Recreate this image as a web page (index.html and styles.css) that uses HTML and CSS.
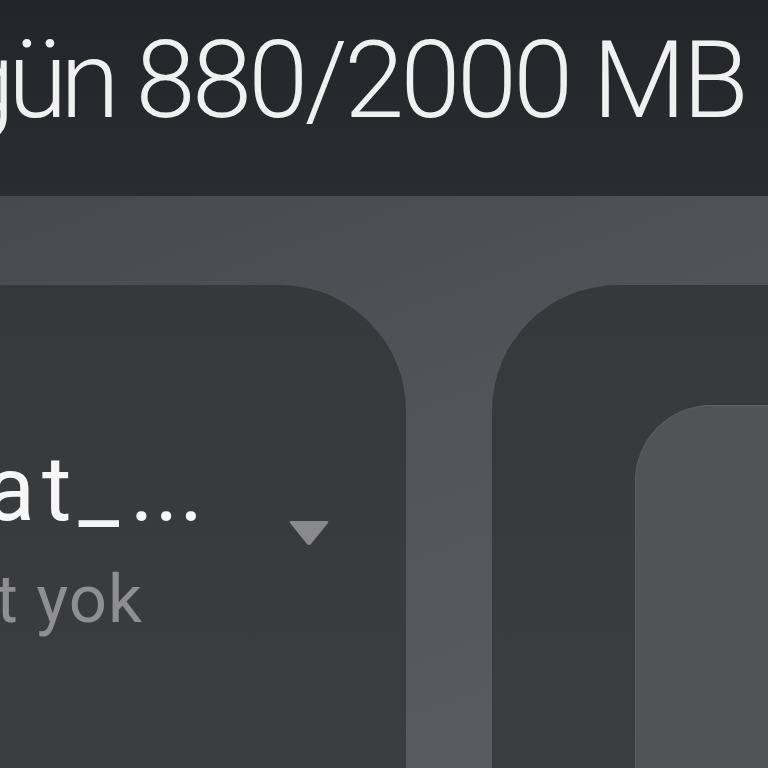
FILE: index.html
```html
<!DOCTYPE html>
<html lang="tr">

<head>
    <title>Veri kullanımı</title>
    <meta charset="utf-8">
    <meta name="viewport" content="width=device-width, initial-scale=1.0">
    <link rel="stylesheet" href="styles.css">
</head>

<body>
    <header class="ust">
        <h1 class="kullanim"><span class="gun">gün</span> 880/2000 MB</h1>
    </header>

    <main class="kartlar">
        <article class="kart sol">
            <div class="satir">
                <div class="metin">
                    <h2 class="baslik">at_<span class="nokta">...</span></h2>
                    <p class="alt">t yok</p>
                </div>
                <svg class="ok" width="42" height="26" viewBox="0 0 42 26">
                    <path d="M3 1 H39 Q41 1 40 3 L23 24 Q21 26 19 24 L2 3 Q1 1 3 1 Z" />
                </svg>
            </div>
        </article>

        <article class="kart sag">
            <div class="ic"></div>
        </article>
    </main>
</body>

</html>
```

FILE: styles.css
```css
html,
body {
    margin: 0;
    height: 100%;
    overflow: hidden;
    background: #4f5053;
    font-family: Roboto, "Noto Sans", sans-serif;
}

.ust {
    height: 196px;
    box-sizing: border-box;
    padding-top: 16px;
    background: linear-gradient(#242528, #2b2c2f);
    white-space: nowrap;
}

.kullanim {
    margin: 0 0 0 -45px;
    font-size: 108px;
    font-weight: 300;
    line-height: 1.2;
    letter-spacing: -3.5px;
    color: #f0f0f0;
}

.gun {
    letter-spacing: -7px;
}

.kartlar {
    display: flex;
    gap: 86px;
    height: 572px;
    padding-top: 89px;
    box-sizing: border-box;
    background: linear-gradient(160deg, #48494c 0%, #535457 45%, #5c5d60 100%);
}

.kart {
    flex: none;
    height: 600px;
    background: linear-gradient(#37383a, #3d3e40);
}

.sol {
    width: 606px;
    margin-left: -200px;
    border-radius: 0 126px 0 0;
}

.sag {
    width: 600px;
    border-radius: 126px 0 0 0;
    padding: 120px 0 0 143px;
    box-sizing: border-box;
}

.ic {
    height: 100%;
    background: #525355;
    border: 1px solid #5c5d5f;
    border-right: none;
    border-radius: 76px 0 0 0;
}

.satir {
    display: flex;
    justify-content: space-between;
    align-items: flex-start;
    padding: 151px 76px 0 186px;
}

.baslik {
    margin: 0;
    font-size: 90px;
    font-weight: 400;
    line-height: 1.2;
    letter-spacing: 7px;
    color: #f6f6f6;
}

.nokta {
    margin-left: 4px;
    letter-spacing: 1px;
}

.alt {
    margin: 15px 0 0 10px;
    font-size: 67px;
    line-height: 1.2;
    letter-spacing: 1px;
    color: #8f8f91;
}

.ok {
    margin-top: 84px;
    fill: #8a8a8c;
}
```
